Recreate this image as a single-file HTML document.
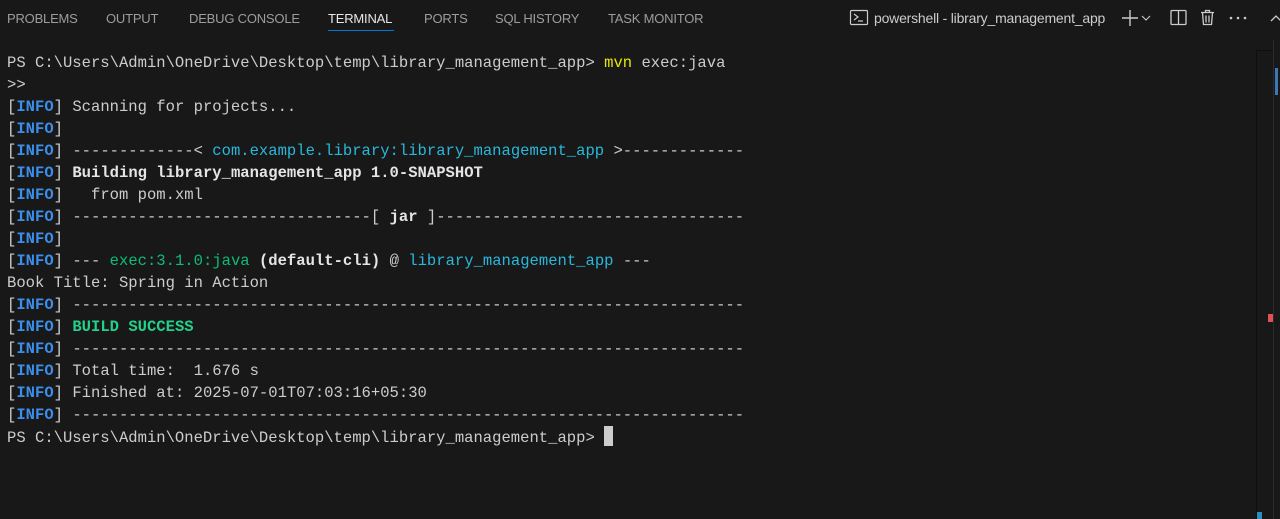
<!DOCTYPE html>
<html><head><meta charset="utf-8"><style>
body{margin:0;width:1280px;height:519px;background:#181818;overflow:hidden;position:relative;font-family:"Liberation Sans",sans-serif}
.tab{position:absolute;top:11px;font-size:13px;color:#9d9d9d;white-space:nowrap;letter-spacing:-0.2px}
.tab.a{color:#e7e7e7}
#ul{position:absolute;left:328px;top:30px;width:66px;height:1px;background:#0078d4}
#term{position:absolute;left:7px;top:52px;font-family:"Liberation Mono",monospace;font-size:15.55px;line-height:22px;color:#cccccc;white-space:pre}
.b{color:#3b8eea;font-weight:bold}
.k{color:#cccccc}
.c{color:#29b8db}
.g{color:#23d18b;font-weight:bold}
.gn{color:#0dbc79}
.y{color:#e5e510}
.w{font-weight:bold;color:#e5e5e5}
.cur{display:inline-block;width:9px;height:20px;background:#cccccc;vertical-align:-4px}
</style></head><body>
<div class="tab" style="left:7px">PROBLEMS</div>
<div class="tab" style="left:106px">OUTPUT</div>
<div class="tab" style="left:189px">DEBUG CONSOLE</div>
<div class="tab a" style="left:328px">TERMINAL</div>
<div class="tab" style="left:424px">PORTS</div>
<div class="tab" style="left:495px">SQL HISTORY</div>
<div class="tab" style="left:608px">TASK MONITOR</div>
<div id="ul"></div>
<svg style="position:absolute;left:849px;top:8px" width="20" height="20" viewBox="0 0 20 20" fill="none" stroke="#cccccc" stroke-width="1.2"><rect x="1.5" y="2.5" width="17" height="14" rx="1"/><path d="M5 6l4 3-4 3M9 13h5"/></svg>
<div class="tab a" style="left:874px;top:10px;font-size:14px;color:#cccccc">powershell - library_management_app</div>
<svg style="position:absolute;left:1120px;top:8px" width="40" height="20" viewBox="0 0 40 20" fill="none" stroke="#cccccc" stroke-width="1.4"><path d="M10 2v16M2 10h16"/><path d="M22 8l4 4 4-4" stroke-width="1.1"/></svg>
<svg style="position:absolute;left:1169px;top:8px" width="20" height="20" viewBox="0 0 20 20" fill="none" stroke="#cccccc" stroke-width="1.3"><rect x="2" y="2.5" width="15" height="14" rx="1"/><path d="M9.5 2.5v14"/></svg>
<svg style="position:absolute;left:1198px;top:8px" width="20" height="20" viewBox="0 0 20 20" fill="none" stroke="#cccccc" stroke-width="1.3"><path d="M3 4.5h13M7.5 4.5V2.5h4v2M4.5 4.5l1 12h8l1-12M8 7.5v7M11 7.5v7"/></svg>
<svg style="position:absolute;left:1228px;top:8px" width="52" height="20" viewBox="0 0 52 20" fill="#cccccc"><circle cx="3" cy="10" r="1.3"/><circle cx="10" cy="10" r="1.3"/><circle cx="17" cy="10" r="1.3"/><path d="M43 13l5-5 5 5" fill="none" stroke="#cccccc" stroke-width="1.3"/></svg>
<div style="position:absolute;left:1256px;top:50px;width:1px;height:469px;background:#0e0e0e"></div>
<div style="position:absolute;left:1256px;top:50px;width:18px;height:1px;background:#0e0e0e"></div>
<div style="position:absolute;left:1273px;top:40px;width:1px;height:479px;background:#2b2b2b"></div>
<div style="position:absolute;left:1275px;top:68px;width:3px;height:27px;background:#3c78b5"></div>
<div style="position:absolute;left:1268px;top:314px;width:5px;height:8px;background:#e05252"></div>
<div style="position:absolute;left:1257px;top:512px;width:5px;height:7px;background:#2a8ec0"></div>
<div id="term">PS C:\Users\Admin\OneDrive\Desktop\temp\library_management_app&gt; <span class="y">mvn</span> exec:java
&gt;&gt;
<span class="k">[</span><span class="b">INFO</span>] Scanning for projects...
[<span class="b">INFO</span>]
[<span class="b">INFO</span>] -------------&lt; <span class="c">com.example.library:library_management_app</span> &gt;-------------
[<span class="b">INFO</span>] <span class="w">Building library_management_app 1.0-SNAPSHOT</span>
[<span class="b">INFO</span>]   from pom.xml
[<span class="b">INFO</span>] --------------------------------[ <span class="w">jar</span> ]---------------------------------
[<span class="b">INFO</span>]
[<span class="b">INFO</span>] --- <span class="gn">exec:3.1.0:java</span> <span class="w">(default-cli)</span> @ <span class="c">library_management_app</span> ---
Book Title: Spring in Action
[<span class="b">INFO</span>] ------------------------------------------------------------------------
[<span class="b">INFO</span>] <span class="g">BUILD SUCCESS</span>
[<span class="b">INFO</span>] ------------------------------------------------------------------------
[<span class="b">INFO</span>] Total time:  1.676 s
[<span class="b">INFO</span>] Finished at: 2025-07-01T07:03:16+05:30
[<span class="b">INFO</span>] ------------------------------------------------------------------------
PS C:\Users\Admin\OneDrive\Desktop\temp\library_management_app&gt; <span class="cur"></span></div>
</body></html>
